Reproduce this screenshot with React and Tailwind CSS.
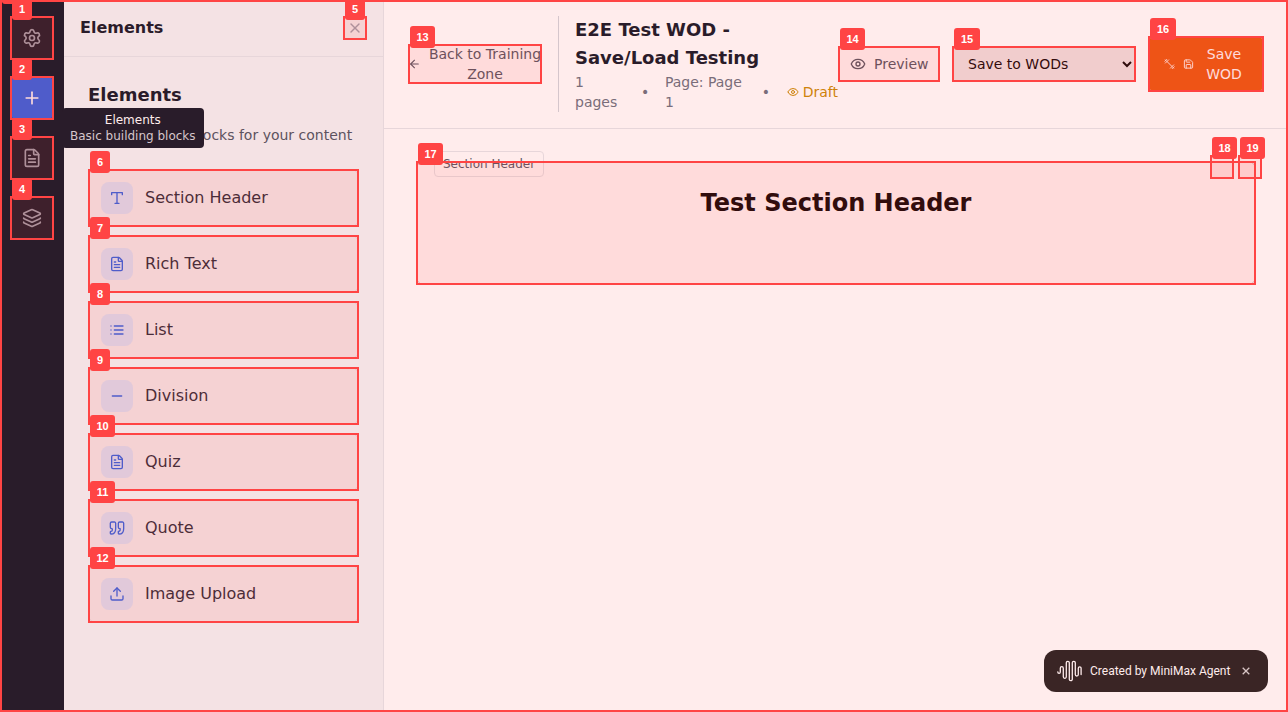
import React from "react";
import { Settings, Plus, FileText, Layers, X, ArrowLeft, Eye, Minus, Upload, Save } from "lucide-react";

function Glyph({ className, children }) {
  return (
    <svg className={className} viewBox="0 0 24 24" fill="none" stroke="currentColor" strokeWidth="2" strokeLinecap="round" strokeLinejoin="round">
      {children}
    </svg>
  );
}

function TypeIcon({ className }) {
  return (
    <Glyph className={className}>
      <polyline points="4 7 4 4 20 4 20 7" />
      <line x1="9" x2="15" y1="20" y2="20" />
      <line x1="12" x2="12" y1="4" y2="20" />
    </Glyph>
  );
}

function ListIcon({ className }) {
  return (
    <Glyph className={className}>
      <path d="M8 6h13M8 12h13M8 18h13M3 6h.01M3 12h.01M3 18h.01" />
    </Glyph>
  );
}

function QuoteIcon({ className }) {
  return (
    <Glyph className={className}>
      <path d="M3 21c3 0 7-1 7-8V5c0-1.25-.756-2.017-2-2H4c-1.25 0-2 .75-2 1.972V11c0 1.25.75 2 2 2 1 0 1 0 1 1v1c0 1-1 2-2 2s-1 .008-1 1.031V20c0 1 0 1 1 1z" />
      <path d="M15 21c3 0 7-1 7-8V5c0-1.25-.757-2.017-2-2h-4c-1.25 0-2 .75-2 1.972V11c0 1.25.75 2 2 2h.75c0 2.25.25 4-2.75 4v3c0 1 0 1 1 1z" />
    </Glyph>
  );
}

function DumbbellIcon({ className }) {
  return (
    <Glyph className={className}>
      <path d="m6.5 6.5 11 11M21 21l-1-1M3 3l1 1M18 22l4-4M2 6l4-4M3 10l7-7M14 21l7-7" />
    </Glyph>
  );
}

function WaveLogo() {
  return (
    <svg className="h-6 w-6 shrink-0 overflow-visible" viewBox="0 0 24 24" fill="none" stroke="white" strokeWidth="1.3" strokeLinecap="round" strokeLinejoin="round">
      <path d="M-.2 12.8v.3a1.25 1.25 0 0 0 2.5 0V9.2a1.5 1.5 0 0 1 3 0v8.6a1.5 1.5 0 0 0 3 0V3.8a1.5 1.5 0 0 1 3 0v16.4a1.5 1.5 0 0 0 3 0V3.8a1.5 1.5 0 0 1 3 0v11.7a1.5 1.5 0 0 0 3 0V9.2a1.4 1.4 0 0 1 2.8 0v6.4" />
    </svg>
  );
}

const tools = [
  { icon: Settings },
  { icon: Plus, active: true },
  { icon: FileText },
  { icon: Layers },
];

const elements = [
  { label: "Section Header", icon: TypeIcon },
  { label: "Rich Text", icon: FileText },
  { label: "List", icon: ListIcon },
  { label: "Division", icon: Minus },
  { label: "Quiz", icon: FileText },
  { label: "Quote", icon: QuoteIcon },
  { label: "Image Upload", icon: Upload },
];

// Highlighted regions: [x, y, width, height], numbered by index.
const marks = [
  [0, 0, 1288, 712],
  [10, 16, 44, 44],
  [10, 76, 44, 44],
  [10, 136, 44, 44],
  [10, 196, 44, 44],
  [343, 16, 24, 24],
  [88, 169, 271, 58],
  [88, 235, 271, 58],
  [88, 301, 271, 58],
  [88, 367, 271, 58],
  [88, 433, 271, 58],
  [88, 499, 271, 58],
  [88, 565, 271, 58],
  [408, 44, 134, 40],
  [838, 46, 102, 36],
  [952, 46, 184, 36],
  [1148, 36, 116, 56],
  [416, 161, 840, 124],
  [1210, 155, 24, 24],
  [1238, 155, 24, 24],
];

function labelWidth(i) {
  if (i < 10) return "w-5";
  return i === 15 || i === 16 ? "w-[26px]" : "w-[25px]";
}

function Marks() {
  return (
    <div className="pointer-events-none absolute inset-0 z-20 overflow-hidden">
      {marks.map(([left, top, width, height], i) => (
        <div key={i} className="absolute border-2 border-[#ff4444] bg-[#ff4444]/10 bg-clip-padding" style={{ left, top, width, height }} />
      ))}
      {marks.map(([x, y], i) => (
        <div
          key={i}
          className={`absolute flex h-[22px] items-center justify-center rounded-[3px] bg-[#ff4444] font-['Liberation_Sans',Arial,sans-serif] text-[11px] font-bold text-white ${labelWidth(i)}`}
          style={{ left: x + 2, top: y - 18 }}
        >
          {i > 0 && i}
        </div>
      ))}
    </div>
  );
}

export default function App() {
  return (
    <div className="relative flex h-[712px] w-[1288px] overflow-hidden bg-white font-['DejaVu_Sans',sans-serif]">
      <nav className="flex w-16 shrink-0 flex-col items-center gap-4 bg-[#111827] py-4">
        {tools.map(({ icon: Icon, active }, i) => (
          <button key={i} className={`relative flex size-11 items-center justify-center rounded-lg ${active ? "bg-[#2563eb] text-white" : "text-[#9ca3af]"}`}>
            <Icon className="size-5" />
            {active && (
              <span className="absolute top-8 left-[52px] z-10 rounded bg-[#111827] px-2 py-1 text-center text-xs whitespace-nowrap text-white">
                <span className="block">Elements</span>
                <span className="block text-[#d1d5db]">Basic building blocks</span>
              </span>
            )}
          </button>
        ))}
      </nav>

      <aside className="flex w-80 shrink-0 flex-col border-r border-gray-200 bg-[#f3f4f6]">
        <div className="flex items-center justify-between border-b border-gray-200 p-4">
          <h2 className="text-base font-semibold text-[#111827]">Elements</h2>
          <button className="flex size-6 items-center justify-center text-[#9ca3af]">
            <X className="size-4" />
          </button>
        </div>
        <div className="p-6">
          <h3 className="mb-4 text-lg font-semibold text-[#111827]">Elements</h3>
          <p className="mb-6 text-sm whitespace-nowrap text-[#4b5563]">Basic building blocks for your content</p>
          <div className="flex flex-col gap-2">
            {elements.map(({ label, icon: Icon }) => (
              <button key={label} className="flex items-center gap-3 rounded-lg border border-gray-200 p-3 text-left">
                <span className="flex size-8 items-center justify-center rounded-lg bg-[#dbeafe] text-[#2563eb]">
                  <Icon className="size-4" />
                </span>
                <span className="text-base text-[#1f2937]">{label}</span>
              </button>
            ))}
          </div>
        </div>
      </aside>

      <main className="flex min-w-0 flex-1 flex-col">
        <header className="flex items-center border-b border-gray-200 px-6 py-4">
          <button className="flex w-[134px] shrink-0 items-center text-sm text-[#4b5563]">
            <ArrowLeft className="h-4 w-[13px] shrink-0" />
            <span className="ml-[7px] w-[114px] shrink-0 text-center">Back to Training Zone</span>
          </button>
          <div className="mr-4 ml-4 h-24 w-px shrink-0 bg-gray-300" />
          <div className="w-[263px] shrink-0">
            <h1 className="w-[200px] text-lg font-semibold text-[#111827]">E2E Test WOD - Save/Load Testing</h1>
            <div className="flex items-center text-sm text-[#6b7280]">
              <span className="w-[50px]">1 pages</span>
              <span className="ml-4 w-2">•</span>
              <span className="ml-4 w-[81px]">Page: Page 1</span>
              <span className="ml-4 w-2">•</span>
              <span className="ml-[17px] flex items-center gap-1 text-[#ca8a04]">
                <Eye className="size-3" />
                Draft
              </span>
            </div>
          </div>
          <div className="flex items-center gap-3">
            <button className="flex w-[102px] items-center gap-2 rounded-lg px-3 py-2 text-sm text-[#4b5563]">
              <Eye className="size-4 shrink-0" />
              Preview
            </button>
            <select className="h-9 w-[184px] rounded-lg border border-transparent bg-[#efefef] px-[11px] text-sm text-black">
              <option>Save to WODs</option>
            </select>
            <button className="flex h-14 w-[116px] items-center rounded-lg bg-[#ea580c] px-4 text-sm text-white">
              <DumbbellIcon className="h-4 w-[11px] shrink-0" />
              <Save className="ml-2 h-4 w-[11px] shrink-0" />
              <span className="flex-1 pl-1.5 text-center">Save WOD</span>
            </button>
          </div>
        </header>

        <div className="flex-1 p-8">
          <section className="relative h-[124px] rounded-lg border border-gray-300 bg-white pt-[25px]">
            <span className="absolute -top-[11px] left-[17px] rounded border border-gray-200 bg-white px-2 py-1 text-xs text-[#4b5563]">Section Header</span>
            <h2 className="text-center text-2xl font-bold text-black">Test Section Header</h2>
          </section>
        </div>
      </main>

      <div className="absolute right-5 bottom-5 flex h-[42px] w-56 items-center rounded-xl bg-[#242222] pl-3.5 font-[Roboto,sans-serif] text-xs text-white">
        <WaveLogo />
        <span className="ml-2 whitespace-nowrap">Created by MiniMax Agent</span>
        <svg className="ml-3 size-2 shrink-0" viewBox="0 0 8 8" fill="none" stroke="#d4d4d4" strokeWidth="1.3">
          <path d="M.7.7l6.6 6.6M7.3.7l-6.6 6.6" />
        </svg>
      </div>

      <Marks />
    </div>
  );
}
